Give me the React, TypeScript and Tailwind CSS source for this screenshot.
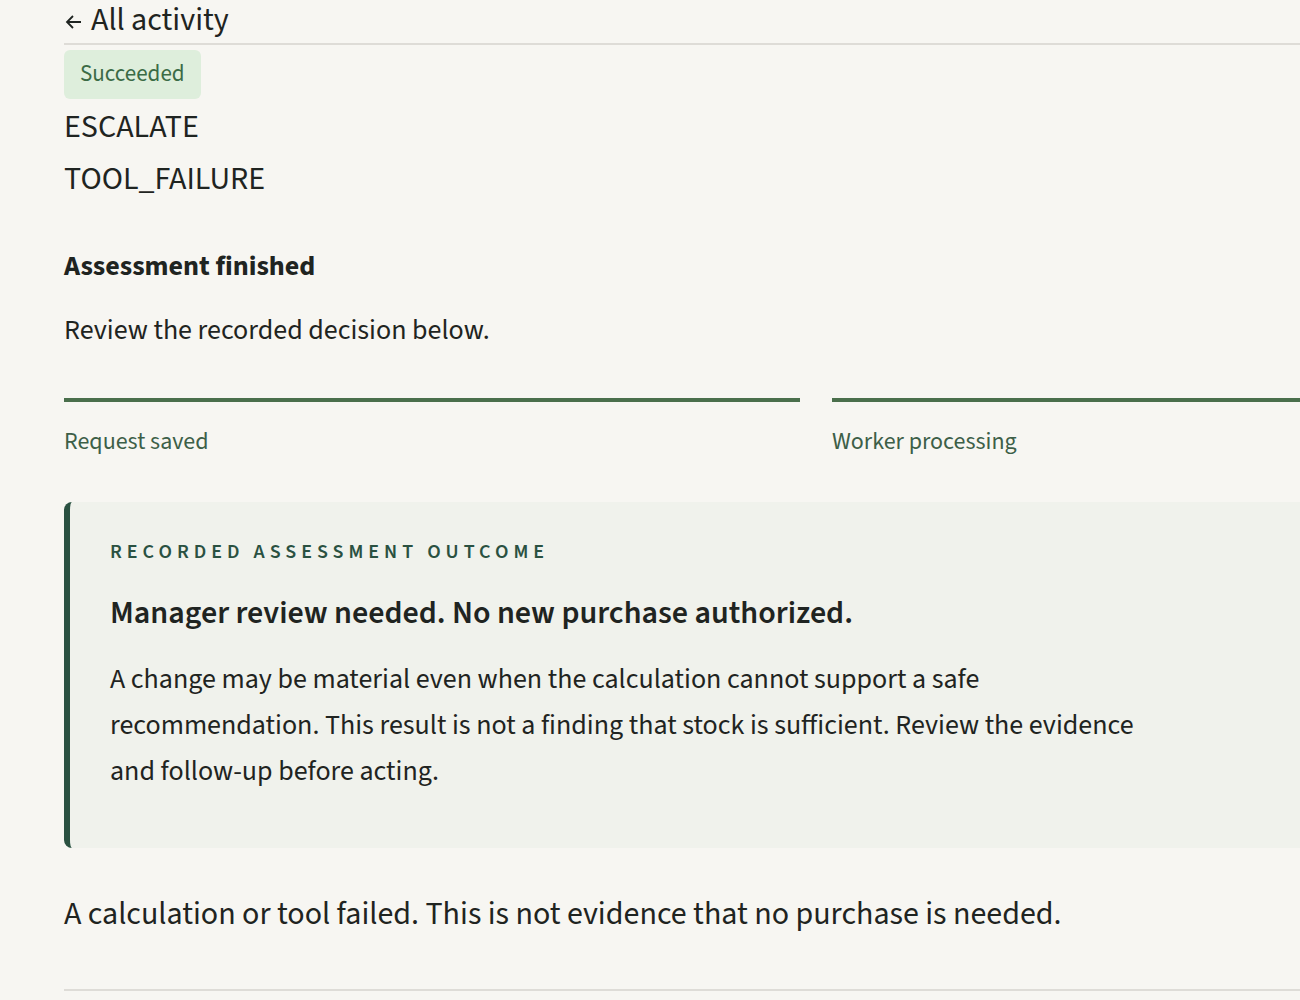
import * as React from "react";

type Step = { label: string; done: boolean };

const steps: Step[] = [
  { label: "Request saved", done: true },
  { label: "Worker processing", done: true },
  { label: "Assessment finished", done: true },
];

function StepBar({ steps }: { steps: Step[] }) {
  return (
    <ol className="grid grid-cols-3 gap-8 mt-[52px]">
      {steps.map((s) => (
        <li key={s.label} className="flex flex-col">
          <div className={s.done ? "h-1 bg-[#4a6f4c]" : "h-1 bg-[#dcdcd6]"} />
          <span className="mt-[26px] text-[24px] leading-7 text-[#3d5f48]">{s.label}</span>
        </li>
      ))}
    </ol>
  );
}

export default function App() {
  return (
    <div
      className="min-h-screen w-full overflow-hidden bg-[#f7f6f2] text-[#1f2421]"
      style={{ fontFamily: '"Source Sans 3", "Source Sans Pro", Lato, "Noto Sans", sans-serif' }}
    >
      <main className="ml-16 w-[2272px]">
        <a href="#" className="flex items-center gap-[7px] text-[32px] leading-[40px] text-[#1f2421]">
          <svg width="20" height="20" viewBox="0 0 20 20" fill="none" stroke="currentColor" strokeWidth="1.8" className="mt-1">
            <path d="M17 10H3.5M9 4l-6 6 6 6" />
          </svg>
          <span>All activity</span>
        </a>
        <div className="mt-[3px] h-[2px] bg-[#dedcd7]" />

        <div className="mt-[5px] inline-block rounded-md bg-[#deeedc] px-4 pt-[9px] pb-[11px] text-[23px] leading-[29px] text-[#3b6b46]">
          Succeeded
        </div>

        <p className="mt-[2px] text-[32px] leading-[52px]">ESCALATE</p>
        <p className="text-[32px] leading-[52px]">TOOL_FAILURE</p>

        <section className="mt-[45px]">
          <h2 className="text-[28px] leading-8 font-bold">Assessment finished</h2>
          <p className="mt-8 text-[28px] leading-8">Review the recorded decision below.</p>
        </section>

        <StepBar steps={steps} />

        <section className="mt-[46px] rounded-l-lg border-l-[6px] border-[#2a5141] bg-[#f0f2ec] pl-10 pt-[38px] pb-[54px]">
          <p className="text-[20px] leading-6 font-semibold tracking-[0.25em] uppercase text-[#2a5141]">
            Recorded assessment outcome
          </p>
          <h3 className="mt-[31px] text-[32px] leading-9 font-semibold">
            Manager review needed. No new purchase authorized.
          </h3>
          <p className="mt-[25px] max-w-[1040px] text-[28px] leading-[46px]">
            A change may be material even when the calculation cannot support a safe recommendation. This
            result is not a finding that stock is sufficient. Review the evidence and follow-up before
            acting.
          </p>
        </section>

        <p className="mt-[46px] text-[32px] leading-10">
          A calculation or tool failed. This is not evidence that no purchase is needed.
        </p>

        <div className="mt-[55px] h-[2px] bg-[#dedcd7]" />
      </main>
    </div>
  );
}
